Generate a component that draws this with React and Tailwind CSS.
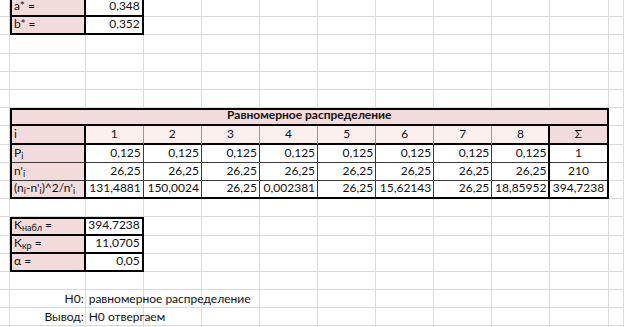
import React from "react";

const PINK = "bg-[#f2dcdb]";

function Sub({ children }) {
  return <span className="text-[9px] leading-none align-[-2px]">{children}</span>;
}

function Background() {
  const cells = [];
  for (let r = 0; r < 19; r++) {
    for (let c = 0; c < 12; c++) {
      cells.push(<div key={r + "-" + c} className="border-r border-b border-[#dadada]" />);
    }
  }
  return (
    <div className="col-start-1 row-start-1 grid grid-cols-[10px_75.7px_repeat(9,58.1px)_1fr] grid-rows-[17.3px_repeat(18,18.2px)]">
      {cells}
    </div>
  );
}

const txt = "flex items-end pb-[2px] leading-[14px] whitespace-nowrap";

function SmallTable({ rows, className, rowsClass }) {
  return (
    <div className={"grid grid-cols-[73.7px_1fr] border-black " + className + " " + rowsClass}>
      {rows.map((row, i) => {
        const last = i === rows.length - 1;
        return (
          <React.Fragment key={i}>
            <div className={txt + " " + PINK + " pl-[2px] border-r-2 border-black " + (last ? "" : "border-b-2")}>
              {row[0]}
            </div>
            <div className={txt + " bg-white justify-end pr-[2px] border-black " + (last ? "" : "border-b-2")}>
              {row[1]}
            </div>
          </React.Fragment>
        );
      })}
    </div>
  );
}

const header = ["1", "2", "3", "4", "5", "6", "7", "8", "Σ"];
const dataRows = [
  [
    <>
      P<Sub>i</Sub>
    </>,
    ["0,125", "0,125", "0,125", "0,125", "0,125", "0,125", "0,125", "0,125", "1"],
  ],
  [
    <>
      n'<Sub>i</Sub>
    </>,
    ["26,25", "26,25", "26,25", "26,25", "26,25", "26,25", "26,25", "26,25", "210"],
  ],
  [
    <>
      (n<Sub>i</Sub>-n'<Sub>i</Sub>)^2/n'<Sub>i</Sub>
    </>,
    ["131,4881", "150,0024", "26,25", "0,002381", "26,25", "15,62143", "26,25", "18,85952", "394,7238"],
  ],
];

function BigTable() {
  const cells = [];
  cells.push(
    <div key="h" className={"col-span-10 border-b-2 border-black font-bold justify-center " + PINK + " " + txt}>
      Равномерное распределение
    </div>
  );
  cells.push(
    <div key="i0" className={txt + " " + PINK + " pl-[2px] border-r-2 border-b-2 border-black"}>
      i
    </div>
  );
  header.forEach((h, j) => {
    let cls = txt + " justify-center border-b-2 border-black ";
    if (j < 7) cls += "bg-[#fcf0ef] border-r border-r-[#9a9a9a]";
    else if (j === 7) cls += "bg-[#fcf0ef] border-r-2";
    else cls += PINK;
    cells.push(
      <div key={"i" + (j + 1)} className={cls}>
        {h}
      </div>
    );
  });
  dataRows.forEach(([label, vals], r) => {
    const last = r === dataRows.length - 1;
    const bb = last ? "" : " border-b border-b-[#3a3a3a]";
    cells.push(
      <div key={"l" + r} className={txt + " " + PINK + " pl-[2px] border-r-2 border-r-black" + bb}>
        {label}
      </div>
    );
    vals.forEach((v, j) => {
      let cls = txt + " bg-white" + bb;
      if (j < 7) cls += " justify-end pr-[2px] border-r border-r-[#3a3a3a]";
      else if (j === 7) cls += " justify-end pr-[2px] border-r-2 border-r-black";
      else cls += " justify-center";
      cells.push(
        <div key={"c" + r + "-" + j} className={cls}>
          {v}
        </div>
      );
    });
  });
  return (
    <div className="col-start-2 col-span-10 row-start-7 row-span-5 border-2 border-black grid grid-cols-[73.7px_repeat(8,58.1px)_56.1px] grid-rows-[16.2px_repeat(3,18.2px)_16.2px]">
      {cells}
    </div>
  );
}

export default function App() {
  return (
    <div className="w-[624px] h-[327px] overflow-hidden bg-white text-[#111] text-[12px] font-[Lato,sans-serif]">
      <div className="grid">
        <Background />
        <div className="col-start-1 row-start-1 grid grid-cols-[10px_75.7px_repeat(9,58.1px)_1fr] grid-rows-[17.3px_repeat(18,18.2px)]">
          <SmallTable
            className="col-start-2 col-span-2 row-start-1 row-span-2 border-x-2 border-b-2"
            rowsClass="grid-rows-[17.3px_16.2px]"
            rows={[
              ["a* =", "0,348"],
              ["b* =", "0,352"],
            ]}
          />
          <SmallTable
            className="col-start-2 col-span-2 row-start-13 row-span-3 border-2"
            rowsClass="grid-rows-[16.2px_18.2px_16.2px]"
            rows={[
              [
                <>
                  K<Sub>набл</Sub>&nbsp;=
                </>,
                "394,7238",
              ],
              [
                <>
                  K<Sub>кр</Sub>&nbsp;=
                </>,
                "11,0705",
              ],
              ["α =", "0,05"],
            ]}
          />
          <BigTable />
          <div className={"col-start-2 row-start-17 justify-end pr-[2px] " + txt}>H0:</div>
          <div className={"col-start-3 col-span-6 row-start-17 pl-[3px] " + txt}>равномерное распределение</div>
          <div className={"col-start-2 row-start-18 justify-end pr-[2px] " + txt}>Вывод:</div>
          <div className={"col-start-3 col-span-6 row-start-18 pl-[3px] " + txt}>H0 отвергаем</div>
        </div>
      </div>
    </div>
  );
}
